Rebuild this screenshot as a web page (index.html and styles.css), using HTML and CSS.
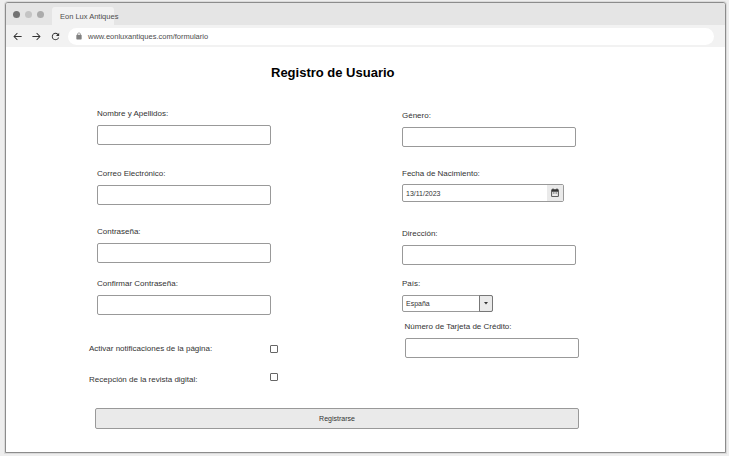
FILE: index.html
```
<!DOCTYPE html>
<html lang="es">
<head>
<meta charset="utf-8">
<title>Eon Lux Antiques</title>
<link rel="stylesheet" href="styles.css">
</head>
<body>
<div class="window">
  <div class="tabs">
    <i class="dot dark"></i><i class="dot light"></i><i class="dot mid"></i>
    <div class="tab"><span>Eon Lux Antiques</span></div>
  </div>
  <div class="toolbar">
    <svg class="nav" viewBox="0 0 24 24"><path d="M21 11H6.800l5.600-5.600L11 4l-8 8 8 8 1.400-1.400L6.800 13H21z"/></svg>
    <svg class="nav" viewBox="0 0 24 24"><path d="M3 11h14.200l-5.600-5.600L13 4l8 8-8 8-1.400-1.400 5.600-5.600H3z"/></svg>
    <svg class="nav" viewBox="0 0 24 24"><path d="M17.650 6.350A8 8 0 1 0 19.730 14h-2.080A6 6 0 1 1 12 6c1.660 0 3.140.690 4.220 1.780L13 11h7V4z"/></svg>
    <div class="address">
      <svg class="lock" viewBox="3 0 18 23"><path d="M18 8h-1V6A5 5 0 0 0 7 6v2H6a2 2 0 0 0-2 2v10a2 2 0 0 0 2 2h12a2 2 0 0 0 2-2V10a2 2 0 0 0-2-2zM8.900 8V6a3.100 3.100 0 0 1 6.200 0v2z"/></svg>
      <span>www.eonluxantiques.com/formulario</span>
    </div>
  </div>
  <main>
    <h1><span>Registro de Usuario</span></h1>
    <form>
      <div class="columns">
        <div class="column left">
          <label><span>Nombre y Apellidos:</span></label><div class="input"></div>
          <label class="gap-l"><span>Correo Electrónico:</span></label><div class="input"></div>
          <label class="gap-m"><span>Contraseña:</span></label><div class="input"></div>
          <label class="gap-s"><span>Confirmar Contraseña:</span></label><div class="input"></div>
          <div class="check first"><span>Activar notificaciones de la página:</span><i class="box"></i></div>
          <div class="check second"><span>Recepción de la revista digital:</span><i class="box"></i></div>
        </div>
        <div class="column right">
          <label><span>Género:</span></label><div class="input"></div>
          <label class="gap-date"><span>Fecha de Nacimiento:</span></label>
          <div class="date"><span>13/11/2023</span><div class="date-button"><svg viewBox="0 0 24 24"><path d="M19 3h-1V1h-2.500v2h-7V1H6v2H5a2 2 0 0 0-2 2v14a2 2 0 0 0 2 2h14a2 2 0 0 0 2-2V5a2 2 0 0 0-2-2zm0 16H5V9h14zM7 11h2v2H7zm4 0h2v2h-2zm4 0h2v2h-2z"/></svg></div></div>
          <label class="gap-addr"><span>Dirección:</span></label><div class="input"></div>
          <label class="gap-country"><span>País:</span></label>
          <div class="select"><span>España</span><div class="arrow"><svg viewBox="0 0 4 3"><path d="M0 0h4L2 2.500z"/></svg></div></div>
          <div class="card">
            <label><span>Número de Tarjeta de Crédito:</span></label><div class="input"></div>
          </div>
        </div>
      </div>
      <div class="submit">Registrarse</div>
    </form>
  </main>
</div>
</body>
</html>
```
FILE: styles.css
```
* { box-sizing: border-box; }
body {
  margin: 0;
  height: 456px;
  padding: 2px 3px 3px 5px;
  background: #eeeeee;
  font-family: "Liberation Sans", Arial, sans-serif;
  font-size: 8px;
  color: #333333;
  overflow: hidden;
}
.window {
  height: 451px;
  border: 1px solid #8c8c8c;
  border-radius: 3px 3px 0 0;
  background: #ffffff;
  box-shadow: 0 0 0 1px #dadada;
  overflow: hidden;
}
.tabs {
  display: flex;
  align-items: center;
  gap: 5px;
  height: 22px;
  padding-left: 7px;
  background: #e5e5e5;
}
.dot { width: 7px; height: 7px; border-radius: 50%; }
.dark { background: #737373; }
.light { background: #c4c4c4; }
.mid { background: #ababab; }
.tab {
  align-self: flex-end;
  width: 62px;
  height: 18px;
  margin-left: 3px;
  padding: 5px 0 0 8px;
  border-radius: 3px 3px 0 0;
  background: #f2f2f2;
  line-height: 10px;
  white-space: nowrap;
  font-size: 7.5px;
  color: #4d4d4d;
}
.toolbar {
  display: flex;
  align-items: center;
  height: 22px;
  padding-left: 6px;
  background: #f2f2f2;
}
.nav { width: 11px; height: 11px; margin-right: 8px; fill: #333333; }
.address {
  display: flex;
  align-items: center;
  width: 646px;
  height: 17px;
  margin-left: -1px;
  padding-left: 8px;
  border-radius: 9px;
  background: #ffffff;
  font-size: 7.5px;
  color: #4d4d4d;
}
.lock { width: 6px; height: 8px; margin-right: 6px; fill: #808080; }
h1 {
  margin: 0;
  padding: 18px 0 0 265px;
  font-size: 13px;
  line-height: 16px;
  color: #000000;
}
.columns { display: flex; height: 327px; padding-left: 91px; }
.column { display: flex; flex-direction: column; align-items: flex-start; }
.left { width: 305px; padding-top: 28px; }
.right { padding-top: 30px; }
label { display: block; height: 10px; line-height: 10px; white-space: nowrap; }
.input {
  width: 174px;
  height: 20px;
  margin-top: 6px;
  border: 1px solid #999999;
  border-radius: 2px;
}
.gap-l { margin-top: 24px; }
.gap-m { margin-top: 22px; }
.gap-s { margin-top: 16px; }
.gap-date { margin-top: 22px; }
.gap-addr { margin-top: 27px; }
.gap-country { margin-top: 14px; }
.check {
  display: flex;
  justify-content: space-between;
  width: 189px;
  margin-left: -8px;
  line-height: 10px;
}
.first { margin-top: 29px; }
.second { margin-top: 21px; }
.box { width: 8px; height: 8px; border: 1px solid #666666; border-radius: 1px; }
.first .box { margin-top: 1px; }
.second .box { margin-top: -2px; }
.date, .select {
  display: flex;
  justify-content: space-between;
  align-items: center;
  height: 18px;
  margin-top: 5px;
  padding-left: 3px;
  border: 1px solid #999999;
  border-radius: 2px;
  font-size: 7px;
}
.date { width: 162px; }
.date-button {
  display: flex;
  align-items: center;
  justify-content: center;
  width: 16px;
  height: 16px;
  background: #eaeaea;
}
.date-button svg { width: 10px; height: 10px; fill: #333333; }
.select { width: 91px; height: 17px; margin-top: 6px; }
.arrow {
  display: flex;
  align-items: center;
  justify-content: center;
  width: 14px;
  height: 17px;
  margin-right: -1px;
  border: 1px solid #777777;
  border-radius: 0 2px 2px 0;
  background: #eaeaea;
}
.arrow svg { width: 4px; height: 3px; fill: #333333; }
.card { margin: 10px 0 0 2.500px; }
.card .input { width: 174.500px; }
.submit {
  width: 484px;
  height: 21px;
  margin-left: 89px;
  border: 1px solid #999999;
  border-radius: 2px;
  background: #eaeaea;
  font-size: 7px;
  line-height: 19px;
  text-align: center;
}
```
